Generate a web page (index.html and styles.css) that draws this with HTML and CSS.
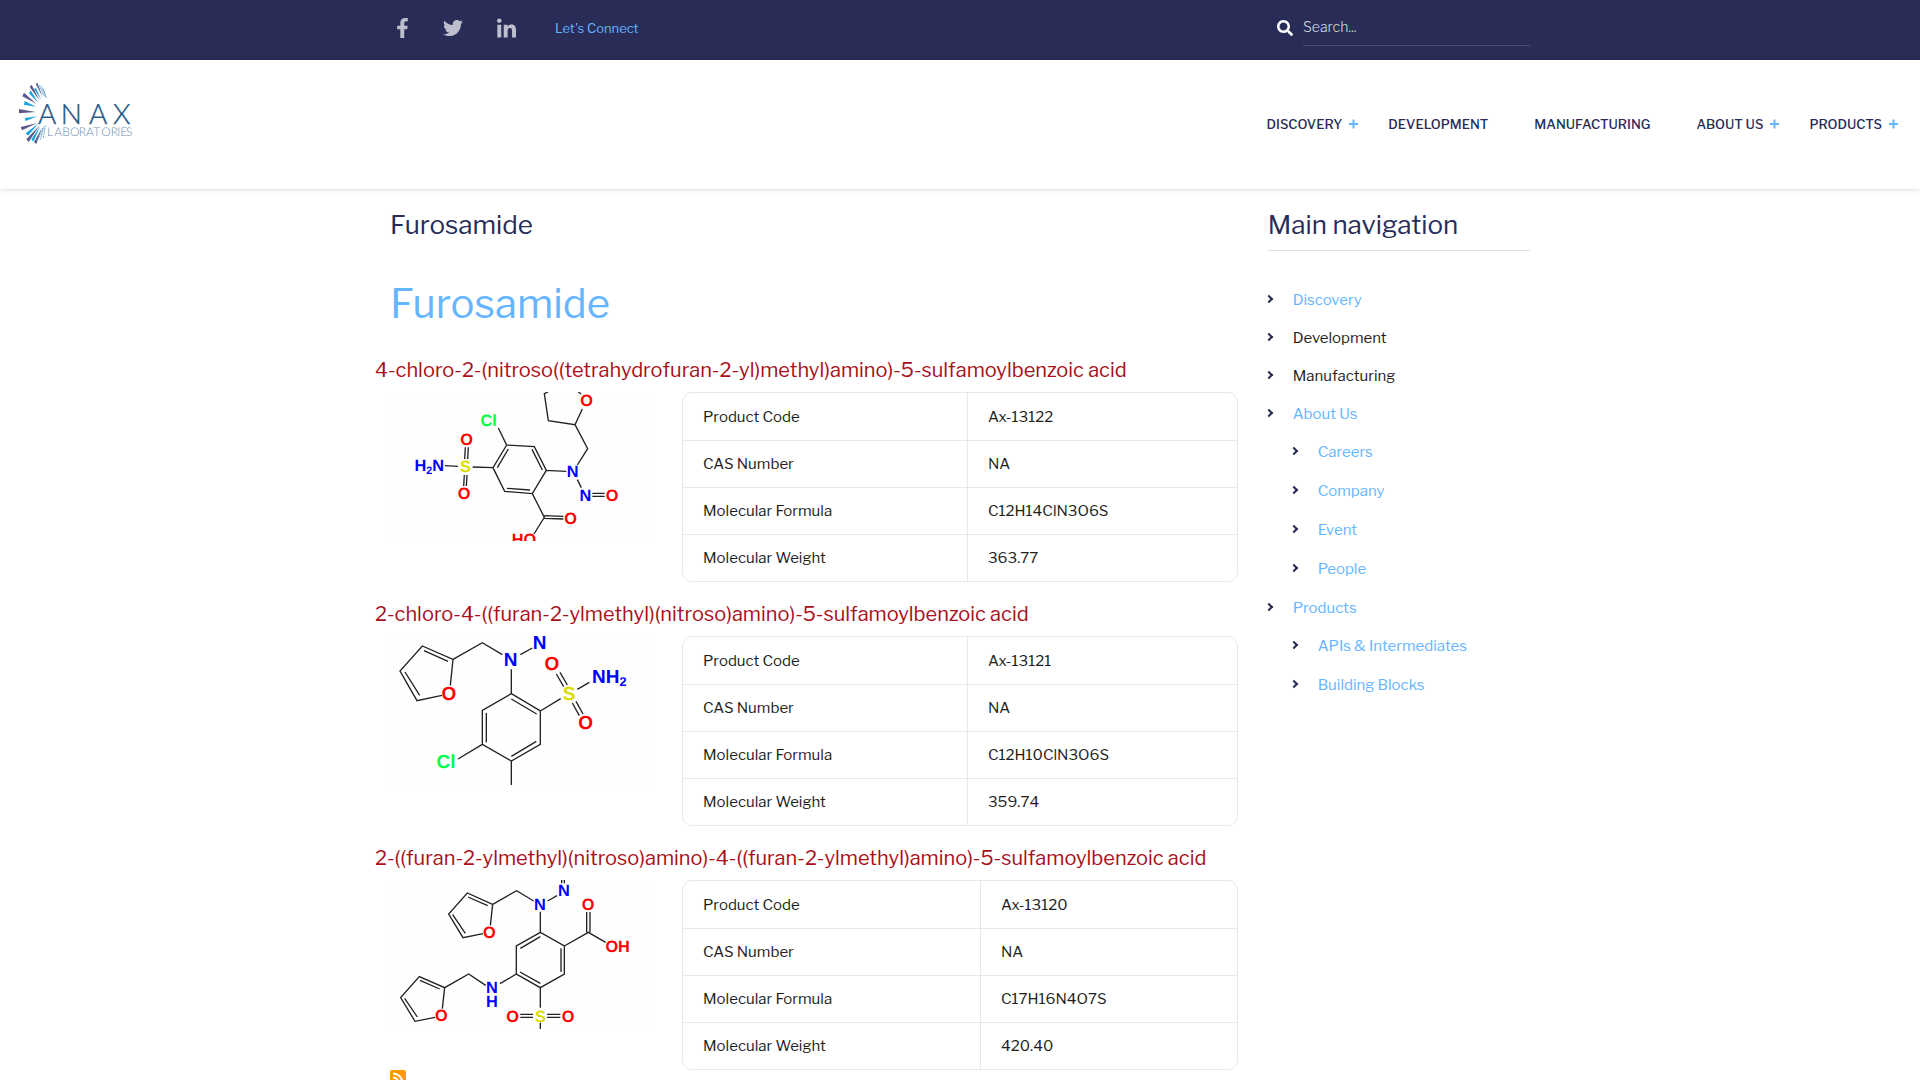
FILE: index.html
```html
<!DOCTYPE html>
<html lang="en">
<head>
<meta charset="utf-8">
<meta name="viewport" content="width=device-width, initial-scale=1">
<title>Furosamide | Anax Laboratories</title>
<link rel="stylesheet" href="styles.css">
</head>
<body>
<div class="topbar">
  <div class="container topbar-inner">
    <ul class="social">
      <li><a href="#" aria-label="Facebook"><svg class="icon-fb" viewBox="0 0 320 512"><path d="M279.14 288l14.22-92.66h-88.91v-60.13c0-25.35 12.42-50.06 52.24-50.06h40.42V6.26S260.43 0 225.36 0c-73.22 0-121.08 44.38-121.08 124.72v70.62H22.89V288h81.39v224h100.17V288z"/></svg></a></li>
      <li><a href="#" aria-label="Twitter"><svg class="icon-tw" viewBox="0 0 512 512"><path d="M459.37 151.716c.325 4.548.325 9.097.325 13.645 0 138.72-105.583 298.558-298.558 298.558-59.452 0-114.68-17.219-161.137-47.106 8.447.974 16.568 1.299 25.34 1.299 49.055 0 94.213-16.568 130.274-44.832-46.132-.975-84.792-31.188-98.112-72.772 6.498.974 12.995 1.624 19.818 1.624 9.421 0 18.843-1.3 27.614-3.573-48.081-9.747-84.143-51.98-84.143-102.985v-1.299c13.969 7.797 30.214 12.67 47.431 13.319-28.264-18.843-46.781-51.005-46.781-87.391 0-19.492 5.197-37.36 14.294-52.954 51.655 63.675 129.3 105.258 216.365 109.807-1.624-7.797-2.599-15.918-2.599-24.04 0-57.828 46.782-104.934 104.934-104.934 30.213 0 57.502 12.67 76.67 33.137 23.715-4.548 46.456-13.32 66.599-25.34-7.798 24.366-24.366 44.833-46.132 57.827 21.117-2.273 41.584-8.122 60.426-16.243-14.292 20.791-32.161 39.308-52.628 54.253z"/></svg></a></li>
      <li><a href="#" aria-label="LinkedIn"><svg class="icon-li" viewBox="0 0 448 448"><path d="M100.28 448H7.4V148.9h92.88zM53.79 108.1C24.09 108.1 0 83.5 0 53.8a53.79 53.79 0 0 1 107.58 0c0 29.7-24.1 54.3-53.79 54.3zM447.9 448h-92.68V302.4c0-34.7-.7-79.2-48.29-79.2-48.29 0-55.69 37.7-55.69 76.7V448h-92.78V148.9h89.08v40.8h1.3c12.4-23.5 42.69-48.3 87.88-48.3 94 0 111.28 61.9 111.28 142.3V448z"/></svg></a></li>
    </ul>
    <a class="connect" href="#">Let's Connect</a>
    <form class="search">
      <button type="submit" aria-label="Search"><svg viewBox="0 0 512 512"><path d="M505 442.7L405.3 343c-4.5-4.5-10.6-7-17-7H372c27.6-35.3 44-79.7 44-128C416 93.1 322.9 0 208 0S0 93.1 0 208s93.1 208 208 208c48.3 0 92.7-16.4 128-44v16.3c0 6.4 2.5 12.5 7 17l99.7 99.7c9.4 9.4 24.6 9.4 33.9 0l28.3-28.3c9.4-9.4 9.4-24.6.1-34zM208 336c-70.7 0-128-57.2-128-128 0-70.7 57.2-128 128-128 70.7 0 128 57.2 128 128 0 70.7-57.2 128-128 128z"/></svg></button>
      <input type="search" placeholder="Search..." aria-label="Search">
    </form>
  </div>
</div>

<header class="header">
  <a class="logo" href="#" aria-label="Anax Laboratories">
    <svg viewBox="54 66 345 189">
      <g fill="#5a5a8c">
        <path d="M57 147v13l50-4zM72 98l-5 11 42 22zM95 74l-6 7 30 41zM62 201l4 10 46-22zM79 238l7 8 33-50zM102 247l7 5 17-49zM112 68l-5 3 22 42z"/>
      </g>
      <g fill="#1ba4dc">
        <path d="M74 123l-2 11 36 6zM92 91l-5 9 28 29zM74 174l3 9 35-14zM77 220l7 7 32-37zM94 238l6 7 21-46zM108 84l-6 3 22 33z"/>
      </g>
      <g stroke="#6fa9cd" stroke-width="3" stroke-dasharray="6 2">
        <path d="M117 75l16 33M123 77l14 34M130 86l9 28M113 240l16-37M121 239l11-40M130 234l6-37"/>
      </g>
      <text class="logo-name" y="191"><tspan x="114">A</tspan><tspan x="182">N</tspan><tspan x="267">A</tspan><tspan x="339">X</tspan></text>
      <text class="logo-sub" x="141 163 187 210 236 258 280 304 332 352 361 378" y="227">LABORATORIES</text>
    </svg>
  </a>
  <nav class="nav" aria-label="Primary">
    <a class="has-menu" href="#">Discovery</a>
    <a href="#">Development</a>
    <a href="#">Manufacturing</a>
    <a class="has-menu" href="#">About Us</a>
    <a class="has-menu" href="#">Products</a>
  </nav>
</header>

<div class="container layout">
  <main class="main">
    <h1 class="page-title">Furosamide</h1>
    <h2 class="term-title">Furosamide</h2>

    <article class="product">
      <h3>4-chloro-2-(nitroso((tetrahydrofuran-2-yl)methyl)amino)-5-sulfamoylbenzoic acid</h3>
      <div class="product-body">
        <svg class="molecule m-small" viewBox="30 36 780 447" role="img" aria-label="Structure of Ax-13122">
          <path d="M504 36l-11 5 12 81 80 12 22-47M595 36l8 6M585 134l38 72-31 49M355 144l25 51 83 5 36 71 60 3M380 195l-41 68 35 71 83 7 42-70M385 207l-33 56M456 208l31 62M381 325l69 5M339 263l-61-2M195 257l39 2M256 202l-2 35M265 202l-2 35M253 285l-2 33M261 285l-2 33M592 299l12 24M637 340h37M637 349h37M457 341l36 71-31 50M493 407l57 2M493 415l57 2"/>
          <g class="o"><text x="620" y="77">O</text><text x="260" y="196">O</text><text x="252" y="358">O</text><text x="696" y="363">O</text><text x="572" y="432">O</text><text x="432" y="496">HO</text></g>
          <g class="n"><text x="148" y="273">H<tspan class="sub" dy="8">2</tspan><tspan dy="-8">N</tspan></text><text x="578" y="291">N</text><text x="616" y="364">N</text></g>
          <text class="s" x="256" y="277">S</text><text class="cl" x="326" y="139">Cl</text>
        </svg>
        <table>
          <tr><th scope="row">Product Code</th><td>Ax-13122</td></tr>
          <tr><th scope="row">CAS Number</th><td>NA</td></tr>
          <tr><th scope="row">Molecular Formula</th><td>C12H14ClN3O6S</td></tr>
          <tr><th scope="row">Molecular Weight</th><td>363.77</td></tr>
        </table>
      </div>
    </article>

    <article class="product">
      <h3>2-chloro-4-((furan-2-ylmethyl)(nitroso)amino)-5-sulfamoylbenzoic acid</h3>
      <div class="product-body">
        <svg class="molecule m-large" viewBox="30 33 780 447" role="img" aria-label="Structure of Ax-13121">
          <path d="M211 181l8-78-92-40-67 75 51 89 75-16M204 109l-72-32M75 141l44 70M219 103l88-50 60 36M421 89l36-20M394 133v73l87 52v100l-87 50-87-50V256l87-50M394 222l76 45M319 264v88M394 394l75-45M307 358l-73 44M394 408v75M481 258l61-37M592 193l36-21M529 147l22 38M540 142l22 38M577 234l21 38M588 229l21 38"/>
          <g class="o"><text x="207" y="224">O</text><text x="516" y="136">O</text><text x="617" y="313">O</text></g>
          <g class="n"><text x="392" y="122">N</text><text x="479" y="72">N</text><text x="688" y="174">NH<tspan class="sub" dy="10">2</tspan></text></g>
          <text class="s" x="567" y="225">S</text><text class="cl" x="198" y="428">Cl</text>
        </svg>
        <table>
          <tr><th scope="row">Product Code</th><td>Ax-13121</td></tr>
          <tr><th scope="row">CAS Number</th><td>NA</td></tr>
          <tr><th scope="row">Molecular Formula</th><td>C12H10ClN3O6S</td></tr>
          <tr><th scope="row">Molecular Weight</th><td>359.74</td></tr>
        </table>
      </div>
    </article>

    <article class="product wide-label">
      <h3>2-((furan-2-ylmethyl)(nitroso)amino)-4-((furan-2-ylmethyl)amino)-5-sulfamoylbenzoic acid</h3>
      <div class="product-body">
        <svg class="molecule m-small" viewBox="30 30 780 447" role="img" aria-label="Structure of Ax-13120">
          <path d="M331 166l7-63-76-34-56 63 43 71 60-12M323 107l-59-26M218 134l38 56M338 103l72-41 51 31M503 93l28-16M545 30v10M553 30v10M481 125v62l72 41v84l-72 41-72-41v-84l72-41M481 200l-60 35M543 235v71M481 340l-61-34M409 312l-49 29M553 228l72-41 52 30M620 187v-61M630 187v-61M317 346l-51-34-72 41-76-33-56 63 43 71 60-12M179 357l-59-26M74 385l38 56M187 416l7-63M481 353v60M421 433h38M421 442h38M501 433h40M501 442h40M481 458v19"/>
          <g class="o"><text x="328" y="204">O</text><text x="624" y="121">O</text><text x="713" y="246">OH</text><text x="184" y="454">O</text><text x="398" y="455">O</text><text x="564" y="455">O</text></g>
          <g class="n"><text x="480" y="121">N</text><text x="552" y="78">N</text><text x="336" y="370">N</text><text x="336" y="411">H</text></g>
          <text class="s" x="481" y="455">S</text>
        </svg>
        <table>
          <tr><th scope="row">Product Code</th><td>Ax-13120</td></tr>
          <tr><th scope="row">CAS Number</th><td>NA</td></tr>
          <tr><th scope="row">Molecular Formula</th><td>C17H16N4O7S</td></tr>
          <tr><th scope="row">Molecular Weight</th><td>420.40</td></tr>
        </table>
      </div>
    </article>

    <a class="feed" href="#" aria-label="Subscribe to Furosamide"><svg viewBox="0 0 16 16"><rect width="16" height="16" rx="2" fill="#ff9900"/><g fill="none" stroke="#fff" stroke-width="2"><path d="M3 3.500a9.500 9.500 0 0 1 9.500 9.500M3 7.500a5.500 5.500 0 0 1 5.500 5.500"/></g><circle cx="4.500" cy="11.500" r="1.500" fill="#fff"/></svg></a>
  </main>

  <aside class="sidebar">
    <h2>Main navigation</h2>
    <ul class="menu">
      <li><a href="#">Discovery</a></li>
      <li><a class="plain" href="#">Development</a></li>
      <li><a class="plain" href="#">Manufacturing</a></li>
      <li><a href="#">About Us</a>
        <ul>
          <li><a href="#">Careers</a></li>
          <li><a href="#">Company</a></li>
          <li><a href="#">Event</a></li>
          <li><a href="#">People</a></li>
        </ul>
      </li>
      <li><a href="#">Products</a>
        <ul>
          <li><a href="#">APIs &amp; Intermediates</a></li>
          <li><a href="#">Building Blocks</a></li>
        </ul>
      </li>
    </ul>
  </aside>
</div>
</body>
</html>
```
FILE: styles.css
```css
*, *::before, *::after { box-sizing: border-box; }

body {
  margin: 0;
  background: #fff;
  color: #1e1e1e;
  font-family: "Libre Franklin", Inter, "Liberation Sans", sans-serif;
  font-size: 15px;
  line-height: 24px;
}

a { color: #66b5ff; text-decoration: none; }
ul { list-style: none; margin: 0; padding: 0; }
h1, h2, h3 { margin: 0; font-weight: 400; }

.container {
  max-width: 1170px;
  margin: 0 auto;
  padding: 0 15px;
}

/* Top bar */
.topbar { background: #282c57; }
.topbar-inner {
  display: flex;
  align-items: center;
  height: 60px;
  padding-bottom: 4px;
}
.social { display: flex; gap: 34px; padding-left: 6px; }
.social a { display: block; }
.social svg { display: block; height: 20px; fill: #bebfcd; }
.social .icon-fb { width: 13px; }
.social .icon-tw { width: 20px; }
.social .icon-li { width: 19px; }
.connect { margin-left: 39px; font-size: 13px; }

.search {
  display: flex;
  align-items: center;
  gap: 10px;
  width: 253px;
  margin-left: auto;
}
.search button {
  padding: 0;
  border: 0;
  background: none;
}
.search button svg { display: block; width: 16px; height: 16px; fill: #fff; }
.search input {
  flex: 1;
  min-width: 0;
  height: 36px;
  padding: 0 0 2px;
  border: 0;
  border-bottom: 1px solid #4a4e73;
  background: none;
  color: #d4d5dd;
  font: 300 14px/24px "Libre Franklin", Inter, sans-serif;
  outline: 0;
}
.search input::placeholder { color: #d4d5dd; opacity: 1; }

/* Header */
.header {
  display: flex;
  justify-content: space-between;
  align-items: flex-start;
  padding: 22px 15px 44px 18px;
  box-shadow: 0 0 5px rgba(0, 0, 0, .2);
}
.logo svg { display: block; width: 115px; height: 63px; }
.logo-name {
  font: 300 84px Lato, Inter, sans-serif;
  fill: #1f5585;
  stroke: #1f5585;
  stroke-width: 1;
  text-rendering: geometricPrecision;
}
.logo-sub {
  font: 300 36px Lato, Inter, sans-serif;
  fill: #6d8dad;
  text-rendering: geometricPrecision;
}
.nav { display: flex; padding-top: 30px; }
.nav a {
  position: relative;
  padding: 0 23px;
  color: #282c57;
  font-size: 13px;
  font-weight: 500;
  text-transform: uppercase;
}
.nav .has-menu::before,
.nav .has-menu::after {
  content: "";
  position: absolute;
  right: 7px;
  top: 11px;
  width: 9px;
  height: 2px;
  background: #66b5ff;
}
.nav .has-menu::after { transform: rotate(90deg); }

/* Page */
.layout {
  display: grid;
  grid-template-columns: 42fr 13fr;
  gap: 30px;
  padding-top: 19px;
  padding-bottom: 40px;
}
.page-title, .sidebar h2 {
  color: #282c57;
  font-size: 26px;
  line-height: 34px;
}
.term-title {
  margin: 38px 0 28px;
  color: #66b5ff;
  font-size: 40px;
  line-height: 48px;
}
.product { margin-bottom: 18px; }
.product h3 {
  margin: 0 -15px 8px;
  color: #a90f1a;
  font-size: 20px;
  line-height: 28px;
}
.product-body {
  display: grid;
  grid-template-columns: 260px 1fr;
  gap: 32px;
  align-items: start;
}
.molecule {
  width: 100%;
  background: #fefefe;
}
.molecule path { fill: none; stroke: #222; stroke-width: 4; }
.molecule text {
  font-family: "Liberation Sans", Arial, sans-serif;
  font-weight: 700;
  text-anchor: middle;
  text-rendering: geometricPrecision;
}
.m-small text { font-size: 49px; }
.m-large text { font-size: 57px; }
.m-small .sub { font-size: 32px; }
.m-large .sub { font-size: 38px; }
.molecule .o { fill: #f00; }
.molecule .n { fill: #00f; }
.molecule .s { fill: #dcdc00; }
.molecule .cl { fill: #00ff48; }

table {
  width: 100%;
  border: 1px solid #e8e8e8;
  border-radius: 10px;
  border-spacing: 0;
  table-layout: fixed;
}
th, td {
  height: 47px;
  padding: 0 20px;
  text-align: left;
  font-weight: 400;
}
th { width: 285px; border-right: 1px solid #e8e8e8; }
.wide-label th { width: 298px; }
tr + tr > * { border-top: 1px solid #e8e8e8; }

.product:last-of-type { margin-bottom: 0; }
.feed { display: block; }
.feed svg { display: block; width: 16px; height: 16px; }

/* Sidebar */
.sidebar h2 {
  padding-bottom: 8px;
  border-bottom: 1px solid #e0e0e0;
}
.menu { padding-top: 30px; }
.menu a {
  display: flex;
  align-items: center;
  gap: 17px;
  height: 38px;
}
.menu a::before {
  content: "";
  width: 6px;
  height: 6px;
  margin: 0 4px 2px -2px;
  border: solid #282c57;
  border-width: 2px 2px 0 0;
  transform: rotate(45deg);
}
.menu .plain { color: #1e1e1e; }
.menu ul { padding-left: 25px; }
.menu ul a { margin-bottom: 1px; }

@media (max-width: 900px) {
  .layout, .product-body { grid-template-columns: 1fr; }
}
```
